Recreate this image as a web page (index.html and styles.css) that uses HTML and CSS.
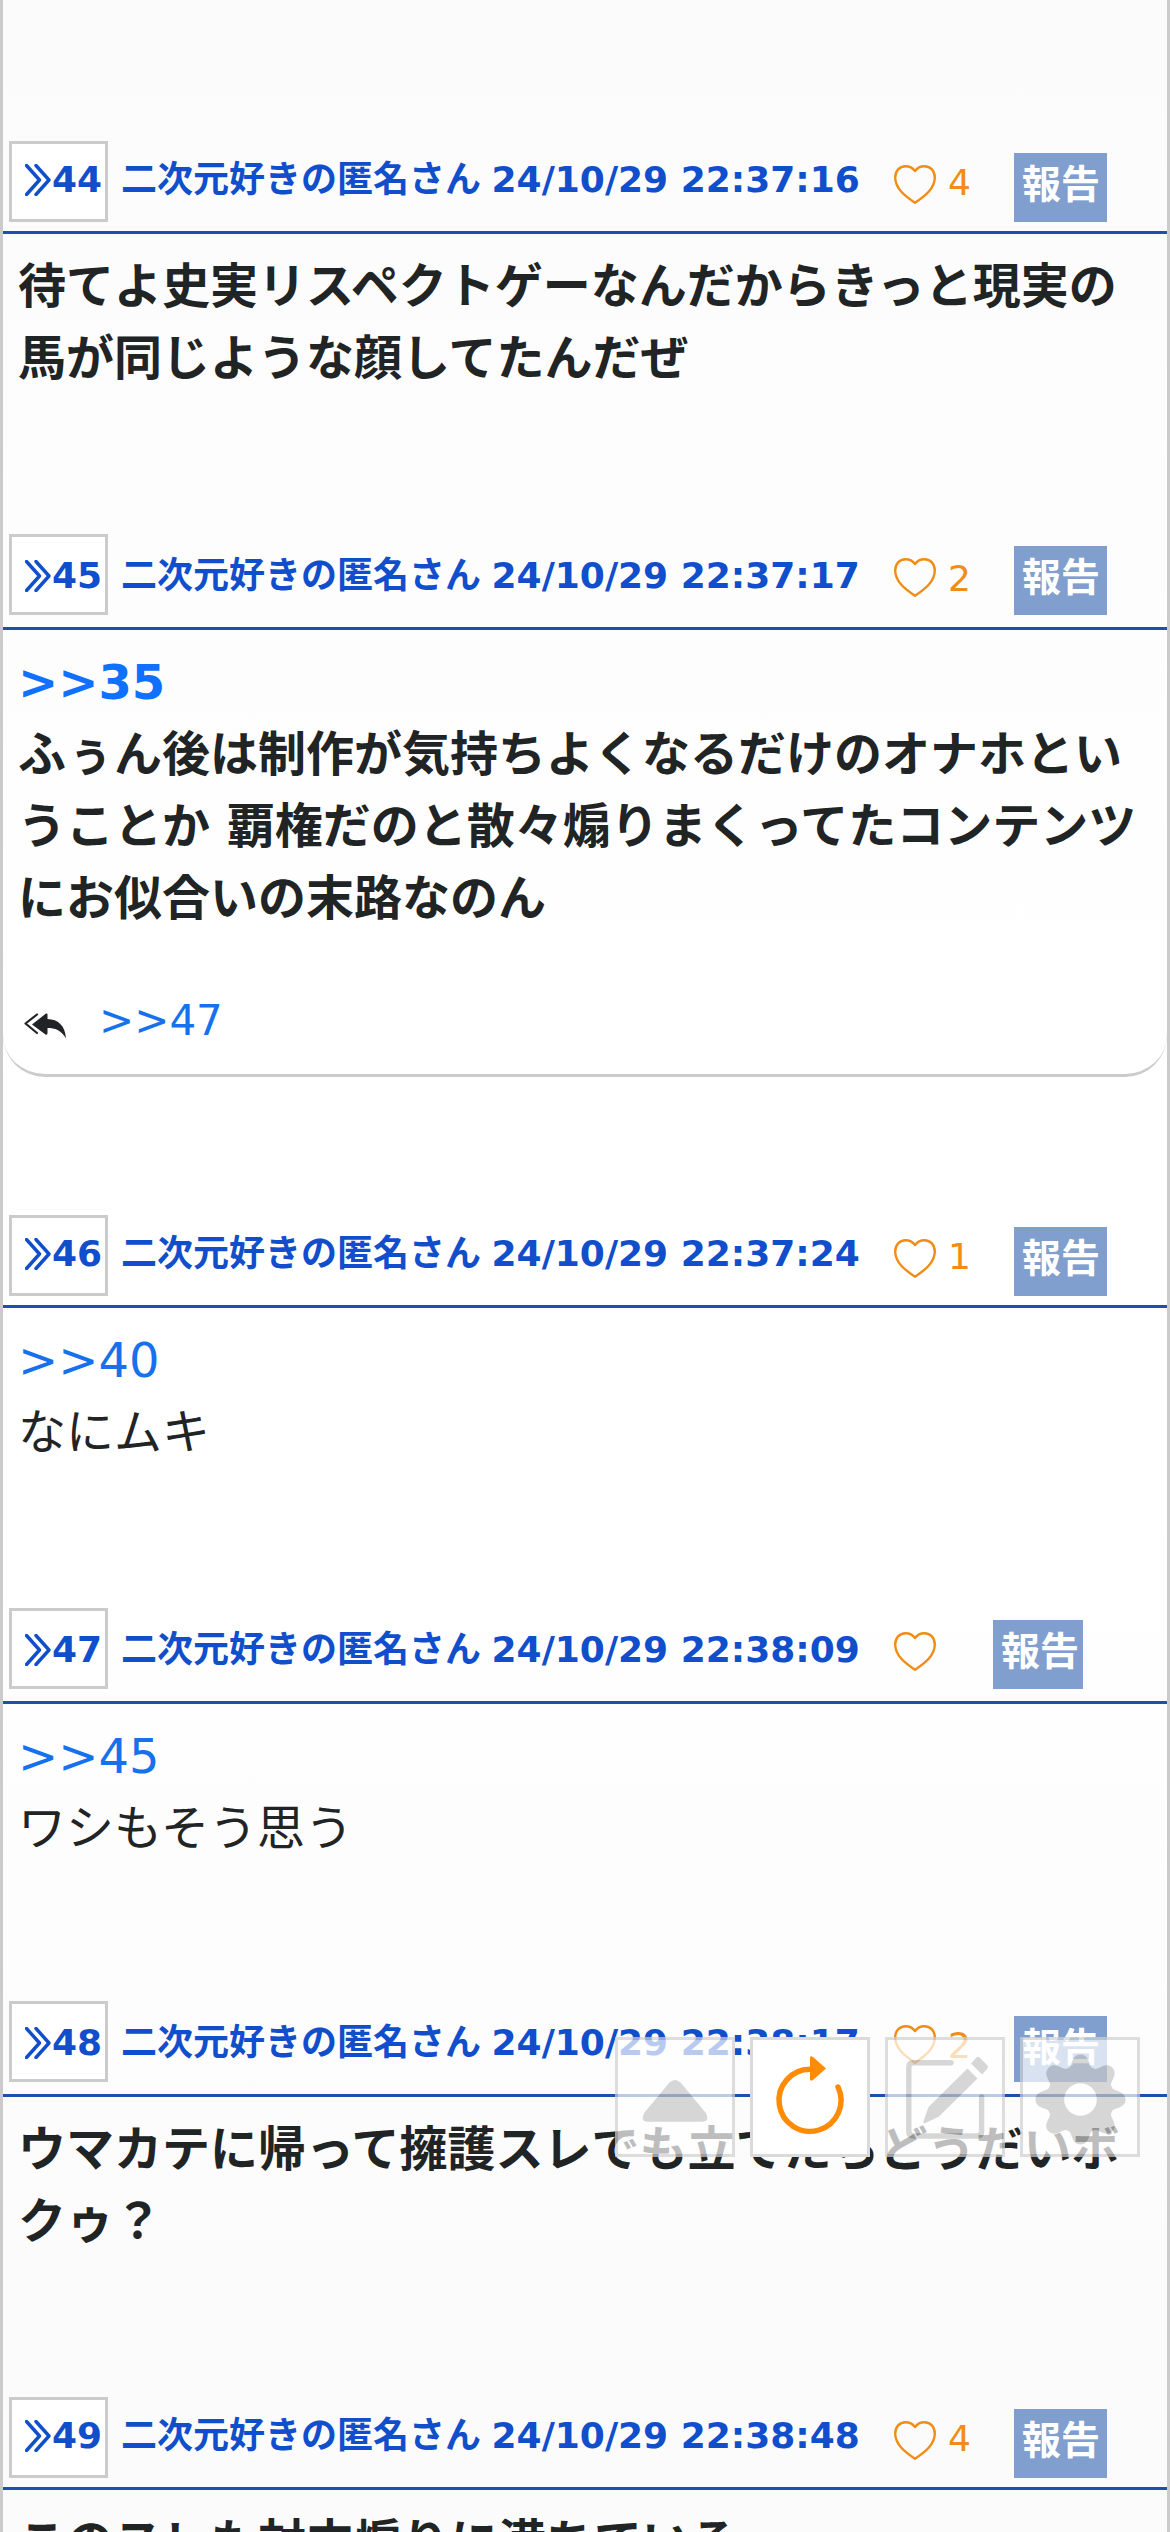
FILE: index.html
```html
<!DOCTYPE html>
<html lang="ja">
<head>
<meta charset="utf-8">
<title>スレッド</title>
<link rel="stylesheet" href="styles.css">
</head>
<body>
<svg class="defs" width="0" height="0" aria-hidden="true">
  <symbol id="chevrons" viewBox="0 0 27 32"><path d="M1.500 1.500 14.500 16 1.500 30.500M11 1.500 24 16 11 30.500" fill="none" stroke="currentColor" stroke-width="3.400" stroke-linecap="round" stroke-linejoin="round"/></symbol>
  <symbol id="heart" viewBox="0 0 42 39"><path d="M21 6C18.500 2.500 15 1.200 11.500 1.200 5.500 1.200 1.200 6 1.200 12.500 1.200 23.500 11 31 21 37.700 31 31 40.800 23.500 40.800 12.500 40.800 6 36.500 1.200 30.500 1.200 27 1.200 23.500 2.500 21 6Z" fill="none" stroke="currentColor" stroke-width="2.400" stroke-linejoin="round"/></symbol>
  <symbol id="tooth" viewBox="0 0 120 120"><path d="M47.900 32C52.500 30.100 51 17.500 60.500 17.500S68.500 30.100 73.100 32L67 42H54Z" fill="currentColor"/></symbol>
</svg>
<main class="thread">
  <article class="post">
    <header class="head">
      <a class="num"><svg class="chev"><use href="#chevrons"/></svg>44</a>
      <span class="name">二次元好きの匿名さん <span class="date">24/10/29 22:37:16</span></span>
      <svg class="heart"><use href="#heart"/></svg><span class="count">4</span>
      <a class="report">報告</a>
    </header>
    <div class="body bold">待てよ史実リスペクトゲーなんだからきっと現実の<br>馬が同じような顔してたんだぜ</div>
  </article>
  <article class="post long">
    <header class="head raised">
      <a class="num"><svg class="chev"><use href="#chevrons"/></svg>45</a>
      <span class="name">二次元好きの匿名さん <span class="date">24/10/29 22:37:17</span></span>
      <svg class="heart"><use href="#heart"/></svg><span class="count">2</span>
      <a class="report">報告</a>
    </header>
    <div class="body bold"><a class="ref">&gt;&gt;35</a><br>ふぅん後は制作が気持ちよくなるだけのオナホとい<br>うことか 覇権だのと散々煽りまくってたコンテンツ<br>にお似合いの末路なのん</div>
    <div class="replies">
      <svg class="reply" viewBox="0 0 42 26"><path d="M13 1.500 1.500 10.500 13 20" fill="none" stroke="currentColor" stroke-width="2.200" stroke-linecap="round" stroke-linejoin="round"/><path d="M8 11.500 22 .500Q23.500 0 23.500 1.500V6C34 6.500 41 12 42 25.500 37 17 31 15 23.500 15V20Q23.500 22.500 21.500 21.500Z" fill="currentColor"/></svg>
      <a class="ref">&gt;&gt;47</a>
    </div>
  </article>
  <article class="post">
    <header class="head">
      <a class="num"><svg class="chev"><use href="#chevrons"/></svg>46</a>
      <span class="name">二次元好きの匿名さん <span class="date">24/10/29 22:37:24</span></span>
      <svg class="heart"><use href="#heart"/></svg><span class="count">1</span>
      <a class="report">報告</a>
    </header>
    <div class="body"><a class="ref">&gt;&gt;40</a><br>なにムキ</div>
  </article>
  <article class="post short">
    <header class="head raised">
      <a class="num"><svg class="chev"><use href="#chevrons"/></svg>47</a>
      <span class="name">二次元好きの匿名さん <span class="date">24/10/29 22:38:09</span></span>
      <svg class="heart"><use href="#heart"/></svg>
      <a class="report narrow">報告</a>
    </header>
    <div class="body"><a class="ref">&gt;&gt;45</a><br>ワシもそう思う</div>
  </article>
  <article class="post short">
    <header class="head raised">
      <a class="num"><svg class="chev"><use href="#chevrons"/></svg>48</a>
      <span class="name">二次元好きの匿名さん <span class="date">24/10/29 22:38:17</span></span>
      <svg class="heart"><use href="#heart"/></svg><span class="count">2</span>
      <a class="report flat">報告</a>
    </header>
    <div class="body bold">ウマカテに帰って擁護スレでも立てたらどうだいボ<br>クゥ？</div>
  </article>
  <article class="post">
    <header class="head">
      <a class="num"><svg class="chev"><use href="#chevrons"/></svg>49</a>
      <span class="name">二次元好きの匿名さん <span class="date">24/10/29 22:38:48</span></span>
      <svg class="heart"><use href="#heart"/></svg><span class="count">4</span>
      <a class="report">報告</a>
    </header>
    <div class="body bold">このスレも対立煽りに満ちている</div>
  </article>
</main>
<nav class="tools">
  <a class="tool"><svg viewBox="0 0 120 120"><path d="M54.500 45.500Q60 40.500 65.500 45.500L90.500 75.500Q95.500 84.700 87 84.700H33Q24.500 84.700 29.500 75.500Z" fill="currentColor"/></svg></a>
  <a class="tool on"><svg viewBox="0 0 120 120"><path d="M60.300 32.300A31 31 0 1 0 88 50" fill="none" stroke="currentColor" stroke-width="5.400" stroke-linecap="round"/><path d="M60 21Q60 18 63 20L76 31.500 63 43Q60 45 60 42Z" fill="currentColor"/></svg></a>
  <a class="tool"><svg viewBox="0 0 120 120"><path d="M66 25.800H28.500Q23.800 25.800 23.800 30.500V94.500Q23.800 99 28.500 99H92Q96.600 99 96.600 94.500V60" fill="none" stroke="currentColor" stroke-width="5.400" stroke-linecap="round"/><path d="M82.500 31.500 92.500 41.500 54 79.500 40.500 86Q37.500 87 38.500 84L43.500 70ZM86 26.500 91.500 20.500Q93 19 94.500 20.500L102.500 28.500Q103.500 30 102.500 31.500L97 37.500Z" fill="currentColor"/></svg></a>
  <a class="tool"><svg viewBox="0 0 120 120"><circle cx="60.500" cy="62.500" r="25" fill="none" stroke="currentColor" stroke-width="17.400"/>
    <use href="#tooth"/><use href="#tooth" transform="rotate(45 60.500 62.500)"/><use href="#tooth" transform="rotate(90 60.500 62.500)"/><use href="#tooth" transform="rotate(135 60.500 62.500)"/><use href="#tooth" transform="rotate(180 60.500 62.500)"/><use href="#tooth" transform="rotate(225 60.500 62.500)"/><use href="#tooth" transform="rotate(270 60.500 62.500)"/><use href="#tooth" transform="rotate(315 60.500 62.500)"/></svg></a>
</nav>
</body>
</html>
```
FILE: styles.css
```css
* { box-sizing: border-box; }
body {
  margin: 0;
  height: 2532px;
  overflow: hidden;
  position: relative;
  font-family: "DejaVu Sans", "Noto Sans CJK JP", sans-serif;
  color: #212425;
}
.defs { display: block; }
.thread {
  height: 2532px;
  overflow: hidden;
  padding-top: 135px;
  border: solid #cbcbcc;
  border-width: 0 3px;
  background: linear-gradient(#fbfbfb 0, #fcfcfc 300px, #fff 1100px, #fff 1500px, #fbfbfb 2300px);
}
.post { height: 396px; }
.post.long { height: 678px; }
.post.short { height: 393px; }
.head {
  height: 99px;
  border-bottom: 3px solid #1c4fae;
  display: flex;
  align-items: flex-start;
  padding: 6px 0 0 6px;
}
.head.raised { padding-top: 3px; }
.num {
  width: 99px;
  height: 81px;
  border: 3px solid #cbcbcb;
  background: #fff;
  display: flex;
  padding-left: 13px;
  font: bold 36px/72px "DejaVu Sans", sans-serif;
  color: #104ecb;
}
.chev { width: 27px; height: 32px; margin-top: 20px; flex: none; }
.name {
  width: 773px;
  margin-left: 13px;
  font-size: 36px;
  font-weight: bold;
  line-height: 77px;
  white-space: nowrap;
  color: #104ecb;
}
.date { margin-left: -2px; }
.raised .num { line-height: 78px; }
.raised .chev { margin-top: 23px; }
.raised .name { line-height: 83px; }
.heart { width: 42px; height: 39px; margin-top: 24px; flex: none; color: #ef8d17; }
.count {
  width: 78px;
  padding-left: 12px;
  font-size: 36px;
  line-height: 84px;
  color: #ef8d17;
}
.raised .count { line-height: 90px; }
.report {
  width: 93px;
  height: 69px;
  margin-top: 12px;
  padding-left: 8px;
  background: #809fce;
  color: #fff;
  font-size: 39px;
  font-weight: bold;
  line-height: 63px;
  white-space: nowrap;
}
.report.narrow { width: 90px; margin-left: 57px; }
.report.flat { height: 66px; margin-top: 15px; }
.body {
  padding: 16px 0 0 15px;
  font-size: 48px;
  line-height: 72px;
  white-space: nowrap;
}
.bold { font-weight: bold; }
.ref { color: #1671ec; }
.bold .ref { color: #1070ff; }
.replies {
  height: 143px;
  border-bottom: 3px solid #cbcbcb;
  border-radius: 0 0 42px 42px;
  padding: 54px 0 0 21px;
  display: flex;
  font-size: 42px;
  line-height: 66px;
}
.reply { width: 42px; height: 26px; margin: 25px 33px 0 0; }
.tools {
  position: absolute;
  left: 615px;
  top: 2037px;
  display: flex;
  gap: 15px;
}
.tool {
  width: 120px;
  height: 120px;
  border: 3px solid #d0d0d0;
  background: #fff;
  color: #c7c7c7;
  opacity: .7;
}
.tool svg { display: block; width: 120px; height: 120px; margin: -3px; }
.tool.on { opacity: 1; border-color: #dadada; color: #fd8b03; }
```
